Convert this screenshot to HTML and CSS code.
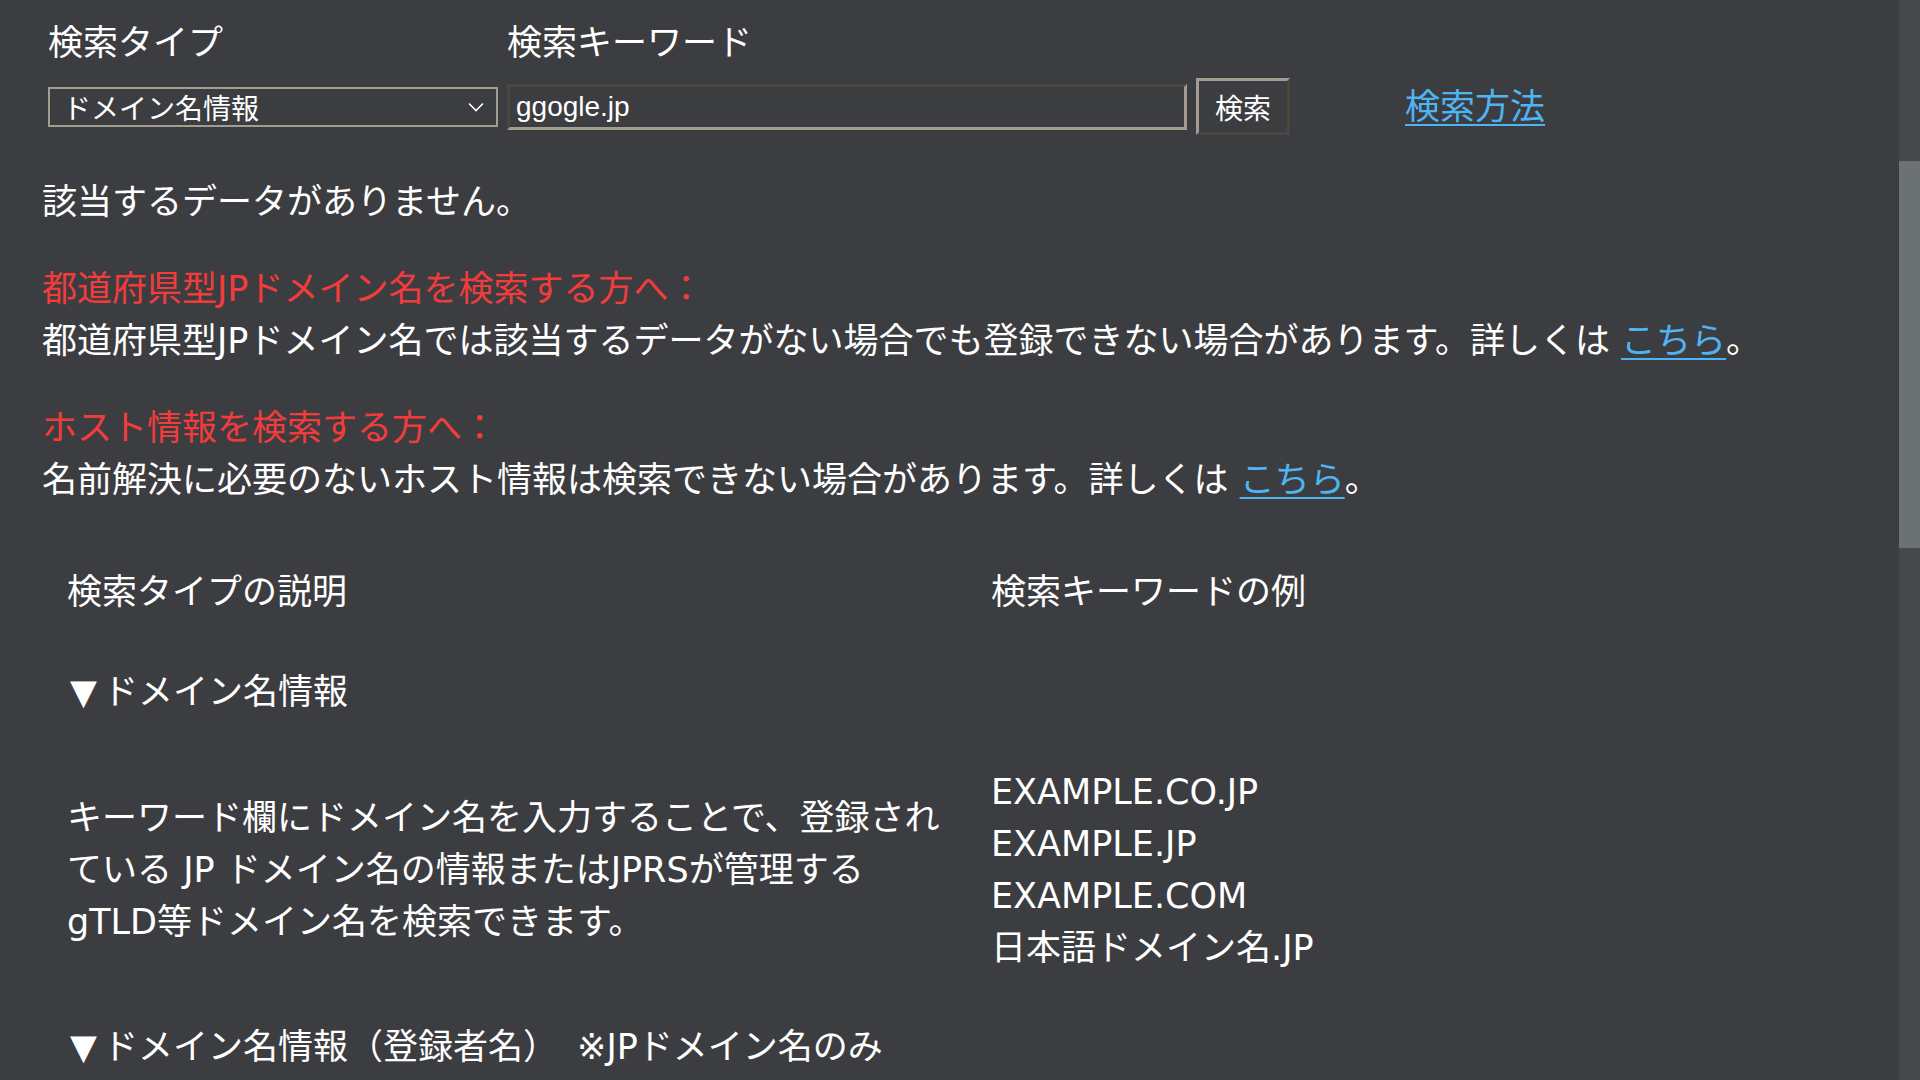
FILE: index.html
```html
<!DOCTYPE html>
<html lang="ja">
<head>
<meta charset="utf-8">
<title>検索結果</title>
<link rel="stylesheet" href="styles.css">
</head>
<body>
<div class="page">
  <form class="search">
    <div class="labels">
      <span class="lbl lbl-type">検索タイプ</span>
      <span class="lbl lbl-kw">検索キーワード</span>
    </div>
    <div class="controls">
      <div class="select">
        <span class="select-text">ドメイン名情報</span>
        <svg class="chev" width="16" height="10" viewBox="0 0 16 10"><polyline points="1,1.5 8,8.5 15,1.5" fill="none" stroke="#ffffff" stroke-width="1.6"/></svg>
      </div>
      <div class="kw">
        <input class="text" type="text" value="ggogle.jp">
        <button class="btn" type="button">検索</button>
      </div>
      <a class="howto" href="#">検索方法</a>
    </div>
  </form>

  <p class="msg">該当するデータがありません。</p>

  <div class="note">
    <p class="warn">都道府県型JPドメイン名を検索する方へ：</p>
    <p class="line">都道府県型JPドメイン名では該当するデータがない場合でも登録できない場合があります。詳しくは <a href="#">こちら</a>。</p>
  </div>

  <div class="note">
    <p class="warn">ホスト情報を検索する方へ：</p>
    <p class="line">名前解決に必要のないホスト情報は検索できない場合があります。詳しくは <a href="#">こちら</a>。</p>
  </div>

  <div class="guide">
    <div class="ghead">検索タイプの説明</div>
    <div class="ghead">検索キーワードの例</div>

    <div class="gtype"><span class="tri">▼</span>ドメイン名情報</div>

    <div class="gdesc">キーワード欄にドメイン名を入力することで、登録されている JP ドメイン名の情報またはJPRSが管理するgTLD等ドメイン名を検索できます。</div>
    <div class="gex">
      <div>EXAMPLE.CO.JP</div>
      <div>EXAMPLE.JP</div>
      <div>EXAMPLE.COM</div>
      <div>日本語ドメイン名.JP</div>
    </div>

    <div class="gtype gtype-next"><span class="tri">▼</span>ドメイン名情報（登録者名） <span class="note-mark">※JPドメイン名のみ</span></div>
  </div>
</div>
<div class="scrollbar"><div class="thumb"></div></div>
</body>
</html>
```

FILE: styles.css
```css
html, body {
  margin: 0;
  padding: 0;
  height: 100%;
  overflow: hidden;
  background: #3c3d40;
}
body {
  color: #ffffff;
  font-family: "DejaVu Sans", "Noto Sans CJK JP", sans-serif;
  font-size: 35px;
  line-height: 52px;
}
.page {
  padding: 0 0 0 42px;
}
.search {
  margin: 0;
  padding: 17px 0 0 6px;
}
.labels {
  display: flex;
  height: 52px;
}
.lbl {
  display: block;
}
.lbl-type {
  width: 459px;
}
.controls {
  display: flex;
  align-items: center;
  margin-top: 9px;
  height: 57px;
}
.select {
  box-sizing: border-box;
  width: 450px;
  height: 40px;
  border: 2px solid #a29c91;
  display: flex;
  align-items: center;
  justify-content: space-between;
  padding: 0 12px 0 13px;
  font-family: "Noto Sans CJK JP", sans-serif;
  font-size: 28px;
  line-height: 36px;
}
.chev {
  display: block;
  margin-top: 1px;
}
.kw {
  display: flex;
  align-items: center;
  margin-left: 9px;
}
.text {
  box-sizing: border-box;
  width: 680px;
  height: 46px;
  margin: 0;
  padding: 0 0 0 6px;
  border: 3px solid;
  border-color: #4b463f #a29c91 #a29c91 #4b463f;
  background: #3c3d40;
  color: #ffffff;
  font-family: "Liberation Sans", Arial, sans-serif;
  font-size: 28px;
  outline: none;
}
.btn {
  box-sizing: border-box;
  width: 94px;
  height: 57px;
  margin: 0 0 0 9px;
  padding: 0;
  border: 3px solid;
  border-color: #a29c91 #4b463f #4b463f #a29c91;
  background: #3c3d40;
  color: #ffffff;
  font-family: "Noto Sans CJK JP", sans-serif;
  font-size: 28px;
  line-height: 40px;
}
.howto {
  margin-left: 115px;
}
a {
  color: #4fb5f2;
  text-decoration: underline;
  text-underline-offset: 5px;
  text-decoration-thickness: 2px;
}
p {
  margin: 0;
}
.msg {
  margin-top: 41px;
}
.note {
  margin-top: 36px;
}
.warn {
  color: #f23c3c;
  line-height: 51px;
}
.line {
  line-height: 52px;
}
.guide {
  display: grid;
  grid-template-columns: 924px 1fr;
  margin: 60px 0 0 25px;
}
.ghead {
  padding-bottom: 48px;
}
.gtype {
  grid-column: 1 / 3;
  padding-left: 3px;
  padding-bottom: 48px;
}
.tri {
  margin-right: 6px;
}
.note-mark {
  margin-left: 8px;
}
.gdesc {
  padding-right: 44px;
  align-self: center;
}
.gex {
  align-self: center;
}
.gtype-next {
  margin-top: 47px;
}
.scrollbar {
  position: fixed;
  top: 0;
  right: 0;
  width: 21px;
  height: 1080px;
  background: #45494b;
}
.thumb {
  position: absolute;
  left: 0;
  top: 161px;
  width: 21px;
  height: 387px;
  background: #6c7174;
}
```
